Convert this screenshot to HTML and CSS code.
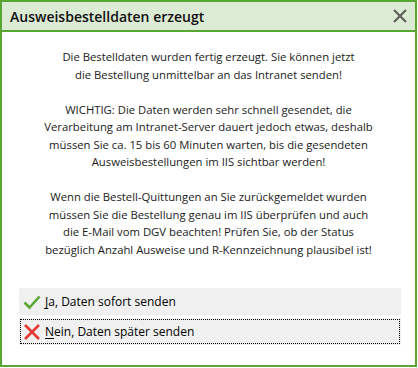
FILE: index.html
```html
<!DOCTYPE html>
<html lang="de">
<head>
    <meta charset="UTF-8">
    <title>Ausweisbestelldaten erzeugt</title>
    <link rel="stylesheet" href="styles.css">
</head>
<body>

<div class="dialog">
    <div class="title-bar">
        <span class="title">Ausweisbestelldaten erzeugt</span>
        <svg class="close" width="16" height="16" viewBox="0 0 16 16">
            <path d="M2 2 L14 14 M14 2 L2 14" stroke="#5a5a5a" stroke-width="2" fill="none"/>
        </svg>
    </div>

    <div class="content">
        <p>Die Bestelldaten wurden fertig erzeugt. Sie können jetzt<br>die Bestellung unmittelbar an das Intranet senden!</p>
        <p>WICHTIG: Die Daten werden sehr schnell gesendet, die<br>Verarbeitung am Intranet-Server dauert jedoch etwas, deshalb<br>müssen Sie ca. 15 bis 60 Minuten warten, bis die gesendeten<br>Ausweisbestellungen im IIS sichtbar werden!</p>
        <p>Wenn die Bestell-Quittungen an Sie zurückgemeldet wurden<br>müssen Sie die Bestellung genau im IIS überprüfen und auch<br>die E-Mail vom DGV beachten! Prüfen Sie, ob der Status<br>bezüglich Anzahl Ausweise und R-Kennzeichnung plausibel ist!</p>

        <div class="choices">
            <button class="choice">
                <svg width="18" height="18" viewBox="0 0 18 18">
                    <path d="M1.5 9.5 L6.5 14.5 L16.5 3.5" stroke="#5aa83a" stroke-width="2.6" fill="none"/>
                </svg>
                <span><u>J</u>a, Daten sofort senden</span>
            </button>
            <button class="choice focused">
                <svg width="18" height="18" viewBox="0 0 18 18">
                    <path d="M2 2 L16 16 M16 2 L2 16" stroke="#e53935" stroke-width="2.6" fill="none"/>
                </svg>
                <span><u>N</u>ein, Daten später senden</span>
            </button>
        </div>
    </div>
</div>

</body>
</html>
```

FILE: styles.css
```css
body { margin: 0; background: #fff; font-family: "Open Sans", Arial, sans-serif; }
.dialog { width: 417px; height: 367px; box-sizing: border-box; border: 2px solid #5aa634; background: #fff; display: flex; flex-direction: column; }
.title-bar { height: 28px; background: #dcebd3; border-bottom: 2px solid #5aa634; display: flex; align-items: center; justify-content: space-between; padding: 0 7px 0 8px; }
.title { font-size: 14px; font-weight: 600; color: #111; }
.close { display: block; }
.content { padding-top: 16px; text-align: center; font-size: 11.3px; line-height: 17.5px; color: #1a1a1a; }
.content p { margin: 0 0 17.5px; }
.choices { display: flex; flex-direction: column; gap: 3px; margin: 30px 14px 0 17px; }
.choice { display: flex; align-items: center; gap: 4px; height: 27px; padding: 0 4px; border: none; background: #f0f0f0; font-family: inherit; font-size: 12px; color: #000; text-align: left; }
.choice.focused { outline: 1px dotted #000; outline-offset: -2px; }
.choice u { text-underline-offset: 2px; }
```
